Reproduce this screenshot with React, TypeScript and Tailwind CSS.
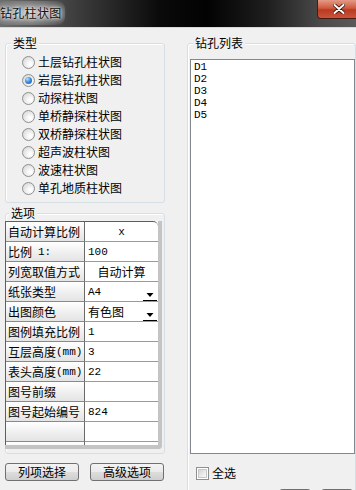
import React from "react";

const cjk = "font-['Noto_Sans_CJK_SC','Noto_Sans',sans-serif]";
const mono = "font-['Liberation_Mono',monospace]";

function Radio({ checked, label }: { checked?: boolean; label: string }) {
  return (
    <div className="flex h-[18px] items-center gap-[3px]">
      <div className="flex h-[13px] w-[13px] items-center justify-center rounded-full border border-[#8e8f8f] bg-[radial-gradient(circle_at_65%_65%,#ffffff_10%,#d0d0d0_100%)]">
        {checked && (
          <div className="h-[7px] w-[7px] rounded-full bg-[radial-gradient(circle_at_35%_30%,#b8e2ff_0%,#3f8ee0_45%,#174f9c_100%)]" />
        )}
      </div>
      <span className={`${cjk} text-[12px] leading-[14px] text-black`}>{label}</span>
    </div>
  );
}

function Arrow() {
  return (
    <svg width="14" height="20" viewBox="0 0 14 20" className="absolute right-[1px] top-0">
      <polygon points="3.5,11 10.5,11 7,15" fill="#000" />
      <line x1="0" y1="18.5" x2="14" y2="18.5" stroke="#000" strokeWidth="1" />
    </svg>
  );
}

type Row = {
  label: React.ReactNode;
  value?: React.ReactNode;
  center?: boolean;
  dropdown?: boolean;
};

const M = ({ children, className = "" }: { children: React.ReactNode; className?: string }) => (
  <span className={`${mono} text-[11px] ${className}`}>{children}</span>
);

const rows: Row[] = [
  { label: "自动计算比例", value: <M>x</M>, center: true },
  { label: <>比例<M className="ml-[6px]">1:</M></>, value: <M>100</M> },
  { label: "列宽取值方式", value: "自动计算", center: true },
  { label: "纸张类型", value: <M>A4</M>, dropdown: true },
  { label: "出图颜色", value: "有色图", dropdown: true },
  { label: "图例填充比例", value: <M>1</M> },
  { label: <>互层高度<M>(mm)</M></>, value: <M>3</M> },
  { label: <>表头高度<M>(mm)</M></>, value: <M>22</M> },
  { label: "图号前缀", value: "" },
  { label: "图号起始编号", value: <M>824</M> },
  { label: "", value: "" },
  { label: "", value: "" },
];

function Button({ label, className = "" }: { label: string; className?: string }) {
  return (
    <div
      className={`flex h-[18px] w-[74px] items-center justify-center rounded-[3px] border border-[#707070] bg-[linear-gradient(#f3f3f3_0%,#ebebeb_50%,#dddddd_51%,#cfcfcf_100%)] ${cjk} text-[12px] leading-[14px] text-black ${className}`}
    >
      {label}
    </div>
  );
}

export default function App() {
  return (
    <div className="flex h-[490px] w-[356px] flex-col overflow-hidden bg-[#f0f0f0]">
      {/* Title bar */}
      <div className="relative flex h-[28px] shrink-0 items-start bg-[linear-gradient(to_right,#6e6e6e_0%,#3c3c3c_22%,#0a0a0a_45%,#020202_58%,#1e1e1e_75%,#4a4a4a_90%,#5a5a5a_100%)] border-b border-[#d8d8d8]">
        <div className="ml-[-3px] mt-[1px] flex h-[24px] items-center rounded-[8px] bg-[radial-gradient(ellipse_at_center,rgba(215,215,215,0.75)_0%,rgba(180,180,180,0.45)_55%,rgba(150,150,150,0)_100%)] px-[3px]">
          <span className={`${cjk} text-[12px] leading-[14px] tracking-[0.3px] text-[#111] [text-shadow:0_0_3px_#fff,0_0_6px_#fff]`}>
            钻孔柱状图
          </span>
        </div>
        <div className="ml-auto mr-[-8px] flex h-[19px] w-[47px] items-center justify-center rounded-bl-[4px] border border-t-0 border-[#4a1a12] bg-[linear-gradient(#e49a86_0%,#cf5a3f_45%,#b83a22_55%,#c8553a_100%)] pr-[4px]">
          <svg width="12" height="10" viewBox="0 0 12 10">
            <path d="M1.5 1 L10.5 9 M10.5 1 L1.5 9" stroke="#3a1008" strokeWidth="3.6" strokeLinecap="round" />
            <path d="M1.5 1 L10.5 9 M10.5 1 L1.5 9" stroke="#ffffff" strokeWidth="2" strokeLinecap="round" />
          </svg>
        </div>
      </div>

      {/* Body */}
      <div className="flex flex-1 pl-[5px]">
        {/* Left column */}
        <div className="flex w-[160px] flex-col">
          {/* 类型 */}
          <div className="relative mt-[15px] h-[160px] rounded-[3px] border border-[#d5dfe5] pl-[16px] pt-[9px] shadow-[inset_1px_1px_0_#ffffff]">
            <span className={`absolute left-[5px] top-[-8px] bg-[#f0f0f0] px-[2px] ${cjk} text-[12px] leading-[14px] text-black`}>
              类型
            </span>
            <Radio label="土层钻孔柱状图" />
            <Radio label="岩层钻孔柱状图" checked />
            <Radio label="动探柱状图" />
            <Radio label="单桥静探柱状图" />
            <Radio label="双桥静探柱状图" />
            <Radio label="超声波柱状图" />
            <Radio label="波速柱状图" />
            <Radio label="单孔地质柱状图" />
          </div>

          {/* 选项 */}
          <div className="relative mt-[10px] h-[241px] rounded-[3px] border border-[#d5dfe5] pb-[4px] pt-[7px] shadow-[inset_1px_1px_0_#ffffff]">
            <span className={`absolute left-[3px] top-[-8px] bg-[#f0f0f0] px-[2px] ${cjk} text-[12px] leading-[14px] text-black`}>
              选项
            </span>
            <div className="ml-[-1px] mr-[2px] h-[228px] overflow-hidden rounded-br-[4px] border-b-[4px] border-r-[4px] border-[#c4c4c4] bg-white">
              <div className="h-[224px] overflow-hidden rounded-tr-[5px] border-l border-t border-[#5e5e5e]">
                {rows.map((r, i) => (
                  <div key={i} className="flex h-[20px] shrink-0">
                    <div
                      className={`flex w-[79px] shrink-0 items-center border-b border-r border-[#6a6a6a] border-b-[#8a8a8a] bg-[linear-gradient(#ffffff_0%,#f2f2f2_45%,#e4e4e4_100%)] pl-[2px] ${cjk} text-[12px] leading-[14px] text-black`}
                    >
                      {r.label}
                    </div>
                    <div
                      className={`relative flex flex-1 items-center border-b border-[#9a9a9a] ${
                        r.center ? "justify-center" : "pl-[3px]"
                      } ${cjk} text-[12px] leading-[14px] text-black`}
                    >
                      {r.value}
                      {r.dropdown && <Arrow />}
                    </div>
                  </div>
                ))}
              </div>
            </div>
          </div>

          {/* Buttons */}
          <div className="mt-[9px] flex gap-[11px]">
            <Button label="列项选择" />
            <Button label="高级选项" />
          </div>
        </div>

        {/* Right column */}
        <div className="ml-[22px] flex flex-1 flex-col">
          <div className="relative mt-[15px] h-[480px] rounded-[3px] border border-[#d5dfe5] pl-[2px] pt-[15px] shadow-[inset_1px_1px_0_#ffffff]">
            <span className={`absolute left-[5px] top-[-8px] bg-[#f0f0f0] px-[2px] ${cjk} text-[12px] leading-[14px] text-black`}>
              钻孔列表
            </span>
            <div className={`h-[395px] border border-[#828790] bg-white pl-[3px] pt-[1px] ${mono} text-[11px] leading-[12px] text-black`}>
              <div>D1</div>
              <div>D2</div>
              <div>D3</div>
              <div>D4</div>
              <div>D5</div>
            </div>
            <div className="mt-[12px] flex items-center gap-[3px] pl-[6px]">
              <div className="flex h-[13px] w-[13px] items-center justify-center border border-[#8e8f8f] bg-white">
                <div className="h-[9px] w-[9px] border border-[#c8c8c8] bg-[linear-gradient(135deg,#d4d4d4_0%,#ececec_60%,#f8f8f8_100%)]" />
              </div>
              <span className={`${cjk} text-[12px] leading-[14px] text-black`}>全选</span>
            </div>
            <div className="mt-[9px] flex gap-[10px] pl-[89px]">
              <div className="h-[20px] w-[32px] rounded-[3px] border border-[#707070] bg-[#e6e6e6]" />
              <div className="h-[20px] w-[32px] rounded-[3px] border border-[#707070] bg-[#e6e6e6]" />
            </div>
          </div>
        </div>
      </div>
    </div>
  );
}
